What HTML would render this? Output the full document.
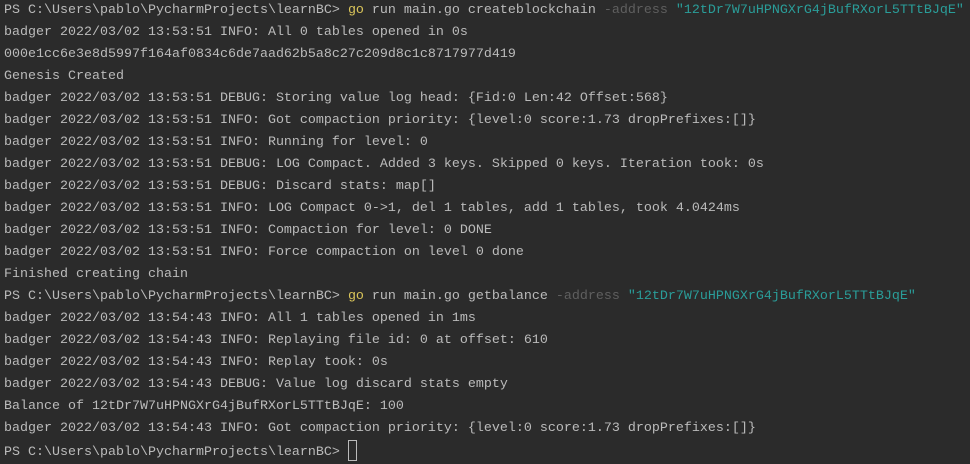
<!DOCTYPE html>
<html><head><meta charset="utf-8"><style>
html,body{margin:0;padding:0;background:#2b2b2b;width:970px;height:464px;overflow:hidden}
pre{margin:0;position:absolute;left:4px;top:0px;font-family:"Liberation Mono",monospace;font-size:13.33px;line-height:22px;color:#bbbbbb;white-space:pre}
.y{color:#d9c45a}.d{color:#5f5f5f}.c{color:#2a9d99}
.cur{display:inline-block;width:7px;height:19px;border:1px solid #bbbbbb;vertical-align:-6px}
</style></head><body><pre>PS C:\Users\pablo\PycharmProjects\learnBC&gt; <span class="y">go</span> run main.go createblockchain <span class="d">-address</span> <span class="c">"12tDr7W7uHPNGXrG4jBufRXorL5TTtBJqE"</span>
badger 2022/03/02 13:53:51 INFO: All 0 tables opened in 0s
000e1cc6e3e8d5997f164af0834c6de7aad62b5a8c27c209d8c1c8717977d419
Genesis Created
badger 2022/03/02 13:53:51 DEBUG: Storing value log head: {Fid:0 Len:42 Offset:568}
badger 2022/03/02 13:53:51 INFO: Got compaction priority: {level:0 score:1.73 dropPrefixes:[]}
badger 2022/03/02 13:53:51 INFO: Running for level: 0
badger 2022/03/02 13:53:51 DEBUG: LOG Compact. Added 3 keys. Skipped 0 keys. Iteration took: 0s
badger 2022/03/02 13:53:51 DEBUG: Discard stats: map[]
badger 2022/03/02 13:53:51 INFO: LOG Compact 0-&gt;1, del 1 tables, add 1 tables, took 4.0424ms
badger 2022/03/02 13:53:51 INFO: Compaction for level: 0 DONE
badger 2022/03/02 13:53:51 INFO: Force compaction on level 0 done
Finished creating chain
PS C:\Users\pablo\PycharmProjects\learnBC&gt; <span class="y">go</span> run main.go getbalance <span class="d">-address</span> <span class="c">"12tDr7W7uHPNGXrG4jBufRXorL5TTtBJqE"</span>
badger 2022/03/02 13:54:43 INFO: All 1 tables opened in 1ms
badger 2022/03/02 13:54:43 INFO: Replaying file id: 0 at offset: 610
badger 2022/03/02 13:54:43 INFO: Replay took: 0s
badger 2022/03/02 13:54:43 DEBUG: Value log discard stats empty
Balance of 12tDr7W7uHPNGXrG4jBufRXorL5TTtBJqE: 100
badger 2022/03/02 13:54:43 INFO: Got compaction priority: {level:0 score:1.73 dropPrefixes:[]}
PS C:\Users\pablo\PycharmProjects\learnBC&gt; <span class="cur"></span></pre></body></html>
